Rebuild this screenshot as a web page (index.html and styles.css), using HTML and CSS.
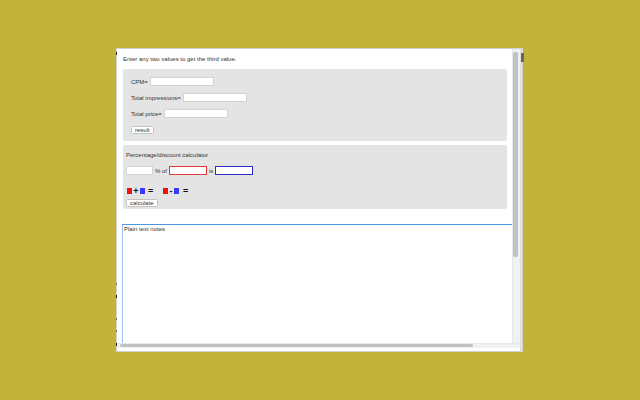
FILE: index.html
```html
<!DOCTYPE html>
<html>
<head>
<meta charset="utf-8">
<link rel="stylesheet" href="styles.css">
</head>
<body>
<div class="window">
  <div class="pane">
    <p class="intro">Enter any two values to get the third value.</p>
    <div class="box box-cpm">
      <div class="row">CPM=<input class="field" type="text"></div>
      <div class="row">Total impressions=<input class="field" type="text"></div>
      <div class="row">Total price=<input class="field" type="text"></div>
      <div class="row"><button class="btn">result</button></div>
    </div>
    <div class="box box-pct">
      <div class="title">Percentage/discount calculator</div>
      <div class="pct-row">
        <input class="field small" type="text">
        <span>% of</span>
        <input class="field red" type="text">
        <span>is</span>
        <input class="field blue" type="text">
      </div>
      <div class="colors">
        <span class="sq sq-red first"></span>
        <span class="op plus">+</span>
        <span class="sq sq-blue b1"></span>
        <span class="op eq e1">=</span>
        <span class="sq sq-red r2"></span>
        <span class="op minus">-</span>
        <span class="sq sq-blue"></span>
        <span class="op eq e2">=</span>
      </div>
      <button class="btn calc">calculate</button>
    </div>
    <textarea class="notes">Plain text notes</textarea>
  </div>
  <div class="vscroll"><div class="vthumb"></div></div>
  <div class="vedge"></div>
  <div class="hscroll"><div class="hthumb"></div></div>
</div>
<span class="mark m-tl"></span>
<span class="mark m-tr"></span>
<span class="mark m-l1"></span>
<span class="mark m-l2"></span>
<span class="mark m-l3"></span>
<span class="mark m-l4"></span>
<span class="mark m-l5"></span>
</body>
</html>
```
FILE: styles.css
```css
html, body {
  margin: 0;
  padding: 0;
}
body {
  background: #c2b43a;
  font-family: "Liberation Sans", Arial, sans-serif;
  font-size: 6px;
  color: #333;
  width: 640px;
  height: 400px;
  overflow: hidden;
  position: relative;
}
.window {
  margin: 48px 0 0 116px;
  width: 405px;
  height: 302px;
  border: 1px solid #d2d2d2;
  background: #fff;
  display: grid;
  grid-template-columns: 395px 8px 2px;
  grid-template-rows: 294px 5px 3px;
}
.pane {
  grid-column: 1;
  grid-row: 1;
  overflow: hidden;
  padding: 7px 0 0 6px;
}
.intro {
  margin: 0;
  height: 7px;
  line-height: 7px;
  white-space: nowrap;
}
.box {
  width: 384px;
  box-sizing: border-box;
  background: #e4e4e4;
  border-radius: 2px;
}
.box-cpm {
  margin-top: 6px;
  padding: 8px 8px 7px;
  display: flex;
  flex-direction: column;
  gap: 7px;
}
.row {
  display: flex;
  align-items: center;
  height: 9px;
  gap: 2px;
  white-space: nowrap;
}
.row:last-child {
  margin-top: 1px;
  height: 8px;
}
.field {
  box-sizing: border-box;
  width: 64px;
  height: 9px;
  margin: 0;
  padding: 0;
  border: 1px solid #d4d4d4;
  background: #fff;
  font-size: 6px;
  outline: none;
}
.field.small { width: 27px; }
.field.red { width: 38px; border-color: #e23a3a; }
.field.blue { width: 38px; border-color: #2a2ac8; }
.btn {
  box-sizing: border-box;
  height: 8px;
  margin: 0;
  padding: 0 3px;
  font-family: "Liberation Sans", Arial, sans-serif;
  font-size: 6px;
  line-height: 6px;
  color: #333;
  background: #fff;
  border: 1px solid #c2c2c2;
  border-radius: 1.5px;
}
.box-pct {
  margin-top: 4px;
  padding: 7px 3px 2px;
}
.title {
  height: 7px;
  line-height: 7px;
  white-space: nowrap;
}
.pct-row {
  margin-top: 7px;
  display: flex;
  align-items: center;
  gap: 2px;
  height: 9px;
}
.colors {
  margin-top: 12px;
  height: 8px;
  display: flex;
  align-items: center;
}
.sq {
  width: 5px;
  height: 6px;
  display: block;
}
.sq-red { background: #f20f0f; }
.sq-blue { background: #3a3aff; }
.first { margin-left: 1px; }
.op {
  font-weight: bold;
  font-size: 9px;
  line-height: 8px;
  color: #111;
  text-align: center;
}
.plus { width: 6px; margin-left: 1px; }
.b1 { margin-left: 1px; }
.e1 { width: 5px; margin-left: 3px; }
.r2 { margin-left: 10px; }
.minus { width: 6px; }
.e2 { width: 5px; margin-left: 4px; }
.calc {
  display: block;
  margin-top: 4px;
}
.notes {
  display: block;
  margin: 15px 0 0 -1px;
  width: 400px;
  height: 150px;
  box-sizing: border-box;
  padding: 1px 1px;
  font-family: "Liberation Sans", Arial, sans-serif;
  font-size: 6px;
  line-height: 7px;
  color: #333;
  border: 1px solid #9cc4f2;
  border-top-color: #4a94e6;
  outline: none;
  resize: none;
}
.vscroll {
  grid-column: 2;
  grid-row: 1;
  background: #f1f1f1;
  border-left: 1px solid #e6e6e6;
}
.vthumb {
  margin: 3px 0 0 0;
  width: 5px;
  height: 205px;
  background: #c1c1c1;
  border-radius: 2px;
}
.vedge {
  grid-column: 3;
  grid-row: 1 / 4;
  background: #e0e0e0;
}
.hscroll {
  grid-column: 1 / 3;
  grid-row: 2;
  background: #f1f1f1;
  border-top: 1px solid #e8e8e8;
}
.hthumb {
  margin-left: 3px;
  width: 353px;
  height: 3px;
  background: #c1c1c1;
  border-radius: 2px;
}
.mark {
  position: absolute;
  display: block;
  background: #222;
  width: 1px;
  height: 2px;
}
.m-tl { left: 116px; top: 52px; height: 3px; }
.m-tr { left: 521px; top: 53px; width: 3px; height: 9px; background: #666; }
.m-l1 { left: 116px; top: 283px; background: #777; }
.m-l2 { left: 116px; top: 295px; height: 3px; }
.m-l3 { left: 116px; top: 318px; background: #777; }
.m-l4 { left: 116px; top: 330px; background: #777; }
.m-l5 { left: 116px; top: 343px; height: 3px; }
```
